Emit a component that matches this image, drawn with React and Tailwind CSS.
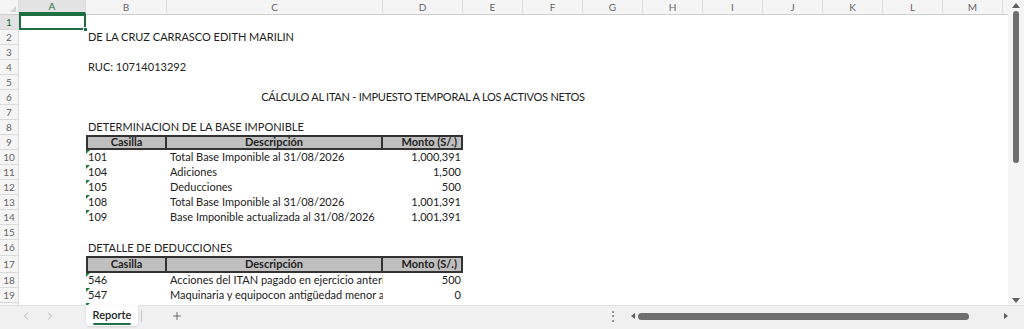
import React from 'react';
import { ChevronLeft, ChevronRight, Plus } from 'lucide-react';

const extraCols = ['E', 'F', 'G', 'H', 'I', 'J', 'K', 'L', 'M'];

const Flag = () => (
  <span className="absolute left-0 top-0 w-0 h-0 border-t-[4px] border-r-[4px] border-t-[#1f7a3a] border-r-transparent" />
);

const Row = ({ n, h = 'h-[15px]', b, c, d, cClip, flag, head, dRight = true, dClass = '' }) => (
  <div className={`flex ${h} shrink-0`}>
    <div className="w-[19px] shrink-0 flex items-center justify-center border-r border-b border-[#dadada] bg-[#f5f5f5] text-[10px] text-[#666]">
      {n}
    </div>
    <div className="w-[67px] shrink-0" />
    {head ? (
      <div className="flex w-[377px] shrink-0 border-2 border-[#333] bg-[#bfbfbf] font-bold text-[11px] text-[#222]">
        <div className="w-[79px] flex items-center justify-center border-r-2 border-[#333]">Casilla</div>
        <div className="w-[216px] flex items-center justify-center border-r-2 border-[#333]">Descripción</div>
        <div className="flex-1 flex items-center justify-end pr-1">Monto (S/.)</div>
      </div>
    ) : (
      <>
        <div className="relative w-[81px] shrink-0 flex items-center pl-[2px] whitespace-nowrap text-[11px] text-[#222]">
          {flag && <Flag />}
          {b}
        </div>
        <div
          className={`w-[216px] shrink-0 flex items-center pl-[3px] whitespace-nowrap text-[11px] text-[#222] ${
            cClip ? 'overflow-hidden' : ''
          }`}
        >
          {c}
        </div>
        <div
          className={`w-[80px] shrink-0 flex items-center whitespace-nowrap text-[11px] text-[#222] ${
            dRight ? 'justify-end pr-[2px]' : 'justify-center'
          } ${dClass}`}
        >
          {d}
        </div>
      </>
    )}
  </div>
);

export default function App() {
  return (
    <div className="w-[1024px] h-[329px] overflow-hidden bg-white flex flex-col" style={{ fontFamily: 'Lato, "Open Sans", sans-serif' }}>
      <div className="flex h-[305px] shrink-0">
        {/* sheet grid */}
        <div className="relative flex-1 flex flex-col overflow-hidden">
          {/* column headers */}
          <div className="flex h-[15px] shrink-0 bg-[#f5f5f5] border-b border-[#cfcfcf] text-[10px] text-[#666]">
            <div className="w-[19px] shrink-0 border-r border-[#dadada] flex items-end justify-end">
              <span className="w-0 h-0 mb-[2px] mr-[2px] border-b-[6px] border-l-[6px] border-b-[#d2d2d2] border-l-transparent" />
            </div>
            <div className="w-[67px] shrink-0 flex items-center justify-center border-r border-[#dadada] bg-[#e3e3e3] text-[#1e6e42] border-b-2 border-b-[#1e6e42]">
              A
            </div>
            <div className="w-[81px] shrink-0 flex items-center justify-center border-r border-[#dadada]">B</div>
            <div className="w-[216px] shrink-0 flex items-center justify-center border-r border-[#dadada]">C</div>
            <div className="w-[80px] shrink-0 flex items-center justify-center border-r border-[#dadada]">D</div>
            {extraCols.map((c) => (
              <div key={c} className="w-[60px] shrink-0 flex items-center justify-center border-r border-[#dadada]">
                {c}
              </div>
            ))}
          </div>

          <div className="relative flex h-[15px] shrink-0">
            <div className="w-[19px] shrink-0 flex items-center justify-center border-r border-b border-[#dadada] bg-[#e3e3e3] text-[10px] text-[#1e6e42]">
              1
            </div>
            <div className="relative w-[67px] shrink-0 -mt-[1px] h-[16px] border-2 border-[#1e6e42]">
              <span className="absolute -right-[4px] -bottom-[4px] w-[5px] h-[5px] bg-[#1e6e42] border border-white" />
            </div>
          </div>
          <Row n={2} b="DE LA CRUZ CARRASCO EDITH MARILIN" />
          <Row n={3} />
          <Row n={4} b="RUC: 10714013292" />
          <Row n={5} />
          <Row
            n={6}
            d="CÁLCULO AL ITAN - IMPUESTO TEMPORAL A LOS ACTIVOS NETOS"
            dRight={false}
            dClass="text-[10px] tracking-[-0.25px]"
          />
          <Row n={7} />
          <Row n={8} b="DETERMINACION DE LA BASE IMPONIBLE" />
          <Row n={9} head />
          <Row n={10} flag b="101" c="Total Base Imponible al 31/08/2026" d="1,000,391" />
          <Row n={11} flag b="104" c="Adiciones" d="1,500" />
          <Row n={12} flag b="105" c="Deducciones" d="500" />
          <Row n={13} flag b="108" c="Total Base Imponible al 31/08/2026" d="1,001,391" />
          <Row n={14} flag b="109" c="Base Imponible actualizada al 31/08/2026" d="1,001,391" />
          <Row n={15} />
          <Row n={16} h="h-[16px]" b="DETALLE DE DEDUCCIONES" />
          <Row n={17} h="h-[17px]" head />
          <Row n={18} flag cClip b="546" c="Acciones del ITAN pagado en ejercicio anterior" d="500" />
          <Row n={19} flag cClip b="547" c="Maquinaria y equipocon antigüedad menor a 3 años" d="0" />
          <Row n={20} flag b="" />
        </div>

        {/* vertical scrollbar */}
        <div className="w-[16px] shrink-0 bg-[#f5f5f5] flex flex-col items-center pt-[3px] pb-[2px]">
          <span className="w-0 h-0 border-l-[4px] border-r-[4px] border-b-[5px] border-l-transparent border-r-transparent border-b-[#606060]" />
          <div className="mt-[3px] w-[6px] h-[152px] rounded-full bg-[#6e6e6e]" />
          <div className="flex-1" />
          <span className="w-0 h-0 border-l-[4px] border-r-[4px] border-t-[5px] border-l-transparent border-r-transparent border-t-[#606060]" />
        </div>
      </div>

      {/* sheet tabs bar */}
      <div className="flex-1 flex items-start bg-[#f0f0f0] border-t border-[#e2e2e2] text-[#333]">
        <div className="w-[86px] shrink-0 flex items-center h-[20px] pl-[20px] gap-[12px] text-[#9a9a9a]">
          <ChevronLeft size={12} strokeWidth={1.5} />
          <ChevronRight size={12} strokeWidth={1.5} />
        </div>
        <div className="w-[52px] h-[21px] -mt-px shrink-0 bg-white rounded-b-[4px] flex flex-col items-center justify-center shadow-sm">
          <span className="text-[11px] font-semibold text-[#222] leading-none mt-[2px]">Reporte</span>
          <span className="mt-[3px] w-[38px] h-[2px] rounded-full bg-[#1e7145]" />
        </div>
        <div className="w-px h-[12px] mt-[4px] ml-[3px] bg-[#c8c8c8]" />
        <div className="w-[70px] h-[20px] flex items-center justify-center">
          <Plus size={12} strokeWidth={1.5} className="text-[#444]" />
        </div>
        <div className="flex-1" />
        <div className="h-[20px] flex items-center text-[12px] text-[#666] leading-none mr-[12px]">⋮</div>
        <div className="h-[20px] flex items-center gap-[3px] mr-[16px]">
          <span className="w-0 h-0 border-t-[3px] border-b-[3px] border-r-[4px] border-t-transparent border-b-transparent border-r-[#606060]" />
          <div className="w-[331px] h-[7px] rounded-full bg-[#6e6e6e]" />
          <div className="w-[29px]" />
          <span className="w-0 h-0 border-t-[3px] border-b-[3px] border-l-[4px] border-t-transparent border-b-transparent border-l-[#606060]" />
        </div>
      </div>
    </div>
  );
}
